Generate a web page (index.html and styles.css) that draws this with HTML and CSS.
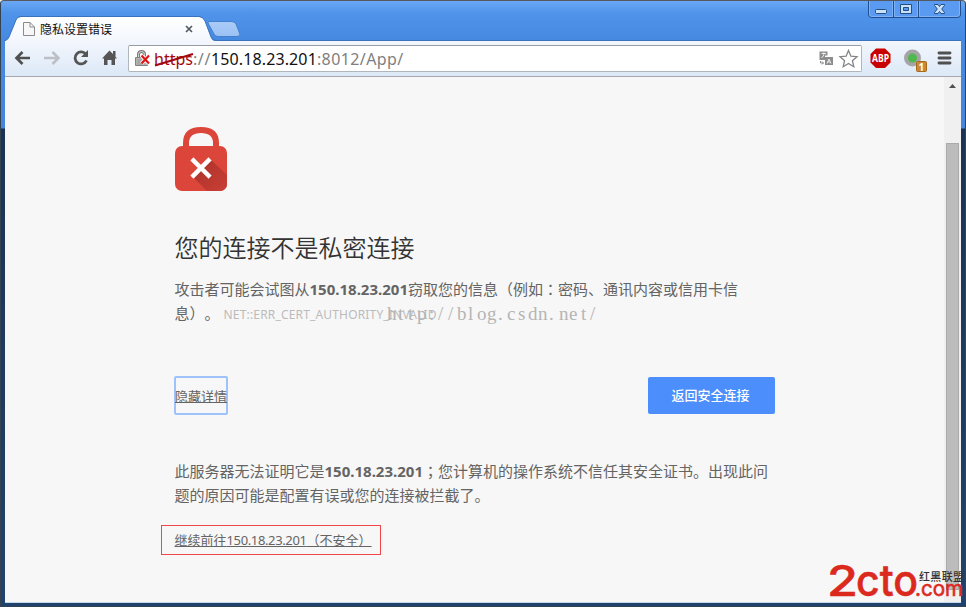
FILE: index.html
```html
<!DOCTYPE html>
<html lang="zh-CN">
<head>
<meta charset="utf-8">
<title>隐私设置错误</title>
<link rel="stylesheet" href="styles.css">
</head>
<body>
<div class="window">
  <header class="titlebar">
    <svg class="tab-shape" width="245" height="25" viewBox="0 0 245 25">
      <defs>
        <linearGradient id="tab" x1="0" y1="0" x2="0" y2="1"><stop offset="0" stop-color="#fff"/><stop offset="1" stop-color="#f3f7fd"/></linearGradient>
        <linearGradient id="newtab" x1="0" y1="0" x2="0" y2="1"><stop offset="0" stop-color="#a9cbf8"/><stop offset="1" stop-color="#9bc1f4"/></linearGradient>
      </defs>
      <path d="M0 26V25Q4 24 5 21L12 4Q13 1 17 1H195Q199 1 201 5L207 21Q208 25 212 25V26Z" fill="url(#tab)"/>
      <path d="M0 25Q4 24 5 21L12 4Q13 .5 17 .5H195Q199 .5 201 5L207 21Q208 24.500 212 24.500H245" fill="none" stroke="#3a72bd"/>
      <path d="M206 5.500H227Q231 5.500 232 8L235.500 17Q237 20.500 232 20.500H214Q211 20.500 210 18L204.500 8Q203 5.500 206 5.500Z" fill="url(#newtab)" stroke="#4580cc"/>
    </svg>
    <div class="tab">
      <svg width="12" height="14" viewBox="0 0 12 14"><path d="M.5.500H7L11.500 5V13.500H.5ZM7 .5V5H11.500" fill="#f7f7f7" stroke="#8b8b8b"/></svg>
      <span class="tab-title">隐私设置错误</span>
      <svg width="8" height="8" viewBox="0 0 8 8"><path d="M1 1L7 7M7 1L1 7" stroke="#535a63" stroke-width="1.700"/></svg>
    </div>
    <svg class="controls" width="94" height="18" viewBox="0 0 94 18">
      <path d="M.5 0V14Q.5 16.500 4 16.500H89Q92.500 16.500 92.500 14V0" fill="#5a9af0" stroke="#234e8e"/>
      <path d="M25.500 0V16M50.500 0V16" stroke="#234e8e"/>
      <path d="M1.500 0V13Q2 15.500 4 15.500H24.500V0M26.500 0V15.500H49.500V0M51.500 0V15.500H89Q91.500 15 91.500 13V0" fill="none" stroke="#7db2f6"/>
      <rect x="7.500" y="8.500" width="11" height="4" rx="1" fill="#c9e0fb" stroke="#234e80"/>
      <path d="M32.500 3.500H43.500V12.500H32.500ZM35.500 6.500V9.500H40.500V6.500Z" fill="#c9e0fb" fill-rule="evenodd" stroke="#234e80"/>
      <path transform="translate(0 -1)" d="M66.500 4.500H70L71.500 6.500L73 4.500H76.500V5.500L73.700 9L76.500 12.500V13.500H73L71.500 11.500L70 13.500H66.500V12.500L69.300 9L66.500 5.500Z" fill="#c9e0fb" stroke="#234e80"/>
    </svg>
  </header>
  <div class="body">
    <nav class="toolbar">
      <svg width="115" height="36" viewBox="0 0 115 36">
        <path d="M25 18H13M17.500 12L11.500 18L17.500 24" fill="none" stroke="#505050" stroke-width="2.700"/>
        <path d="M39 18H52M47.500 12L53.500 18L47.500 24" fill="none" stroke="#bcc0c5" stroke-width="2.500"/>
        <path d="M81 14.500A6 6 0 1 0 81.500 20.500" fill="none" stroke="#555" stroke-width="2.800"/><path d="M83 10V17H76Z" fill="#555"/>
        <path d="M97 18.500L104.500 10.500L108 14V11H110.500V16.800L112 18.500H110V25H106.500V20H102.500V25H99V18.500Z" fill="#555"/>
      </svg>
      <div class="omnibox">
        <svg class="badlock" width="16" height="17" viewBox="0 0 16 17">
          <path d="M3.500 8V4.500Q3.500 1.500 6.500 1.500Q9.500 1.500 9.500 4.500V8" fill="none" stroke="#777" stroke-width="3"/><path d="M3.500 8V4.500Q3.500 1.500 6.500 1.500Q9.500 1.500 9.500 4.500V8" fill="none" stroke="#ddd"/>
          <path d="M.5 7.500H12.500V15.500H.5Z" fill="#b6b6b6" stroke="#828282"/><path d="M2 10H10M2 12H10M2 14H10" stroke="#999"/>
          <path d="M6.500 5.500L14 13.500M14 5.500L6.500 13.500" stroke="#fff" stroke-width="4"/><path d="M6.500 5.500L14 13.500M14 5.500L6.500 13.500" stroke="#dc1515" stroke-width="2.200"/>
        </svg>
        <span class="url"><span class="scheme">https<svg class="strike" width="41" height="15" viewBox="0 0 41 15"><path d="M1 13.500L39 2" stroke="#a3080c" stroke-width="2"/></svg></span><span class="sep">://</span><span class="host">150.18.23.201</span><span class="path">:8012/App/</span></span>
        <svg class="omni-icons" width="40" height="20" viewBox="0 0 40 20">
          <path d="M.5 2.500H8.500V6.500H6V11H.5Z" fill="#8c8c8c"/><path d="M6 8H14V16H6Z" fill="#8c8c8c"/><path d="M2.500 4.500H7M4.800 3.500V5.500Q4.500 8 2.500 8.500" stroke="#eee" fill="none"/><path d="M8 14.500L10 10L12 14.500M9 13H11" fill="none" stroke="#eee"/><path d="M1.500 12V14H4.500M3 12.500L4.500 14L3 15.500" fill="none" stroke="#8c8c8c"/>
          <path d="M29.500 1.500L31.900 7.200L38 7.700L33.400 11.700L34.800 17.700L29.500 14.500L24.200 17.700L25.600 11.700L21 7.700L27.100 7.200Z" fill="#fff" stroke="#848484" stroke-width="1.300"/>
        </svg>
      </div>
      <svg class="ext" width="99" height="36" viewBox="0 0 99 36">
        <path d="M14 8.500H23L28.500 14V22.500L23 28H14L8.500 22.500V14Z" fill="#c90000"/>
        <text class="abp" x="10" y="21.800" textLength="17" lengthAdjust="spacingAndGlyphs">ABP</text>
        <circle cx="50.500" cy="18" r="8.500" fill="#a5a5a5"/><circle cx="50.500" cy="18" r="4.500" fill="#4fb84e"/>
        <rect x="54.500" y="21.500" width="10" height="10" rx="1" fill="#cc8934" stroke="#a8681b"/><text class="count" x="56.500" y="30.500">1</text>
        <path d="M77 13H88M77 18H88M77 23H88" stroke="#505050" stroke-width="2.900" stroke-linecap="round"/>
      </svg>
    </nav>
    <div class="viewport">
      <main class="page">
        <svg class="lock" width="52" height="64" viewBox="0 0 52 64">
          <defs><linearGradient id="shade" x1="0" y1="0" x2="1" y2="1"><stop offset="0" stop-color="#a83029"/><stop offset="1" stop-color="#cc4036"/></linearGradient>
          <clipPath id="lockbody"><rect y="19" width="52" height="45" rx="7"/></clipPath></defs>
          <path d="M11 21V16Q11 3 26 3Q41 3 41 16V21" fill="none" stroke="#dc4539" stroke-width="6"/>
          <rect y="19" width="52" height="45" rx="7" fill="#dc4539"/>
          <path d="M35 32L54 50V66H34L17 49Z" fill="url(#shade)" clip-path="url(#lockbody)"/>
          <path d="M18.500 33.500L33.500 48.500M33.500 33.500L18.500 48.500" stroke="#fff" stroke-width="4.500" stroke-linecap="square"/>
        </svg>
        <h1>您的连接不是私密连接</h1>
        <p class="lead">攻击者可能会试图从<b>150.18.23.201</b>窃取您的信息<i lang="zh-TW">（</i>例如<i lang="zh-TW">：</i>密码、通讯内容或信用卡信<br>息<i lang="zh-TW">）</i>。<span class="code">NET::ERR_CERT_AUTHORITY_INVALID</span></p>
        <div class="actions"><a class="details">隐藏详情</a><button>返回安全连接</button></div>
        <p class="explain">此服务器无法证明它是<b>150.18.23.201</b><i lang="zh-TW">；</i>您计算机的操作系统不信任其安全证书。出现此问<br>题的原因可能是配置有误或您的连接被拦截了。</p>
        <div class="proceed"><a>继续前往<span class="ip">150.18.23.201</span><i lang="zh-TW">（</i>不安全<i lang="zh-TW">）</i></a></div>
      </main>
      <aside class="scroll"><svg width="7" height="4" viewBox="0 0 7 4"><path d="M0 4L3.500 0L7 4Z" fill="#505050"/></svg><div class="thumb"></div></aside>
    </div>
  </div>
  <svg class="watermark" width="220" height="30" viewBox="0 0 220 30"><text y="21" x="1 12 22 31 43 52 62 71 82 91 101 112 121 132 142 152 163 173 183 195 204">http://blog.csdn.net/</text></svg>
  <svg class="brand" width="142" height="44" viewBox="0 0 142 44">
    <g class="brand-red"><text class="big" x="3" y="36" textLength="31" lengthAdjust="spacingAndGlyphs">2</text><text class="big" x="32" y="36" textLength="62" lengthAdjust="spacingAndGlyphs">cto</text><text class="com" x="91" y="36" textLength="48" lengthAdjust="spacingAndGlyphs">.com</text></g>
    <text class="union" x="95" y="21" textLength="45">红黑联盟</text>
  </svg>
</div>
</body>
</html>
```
FILE: styles.css
```css
* { box-sizing: border-box; }
body { margin: 0; width: 966px; height: 607px; overflow: hidden; font-family: "Noto Sans", "Noto Sans CJK SC", sans-serif; text-spacing-trim: space-all; }
svg { display: block; flex: none; overflow: visible; }
.window { position: relative; width: 966px; height: 607px; display: flex; flex-direction: column; padding: 0 4px 3px; border: 1px solid #35424f; border-top-color: #55585c; border-radius: 4px 4px 0 0; background: linear-gradient(#6aa8f5 0, #4f94ea 12px, #4589e0 40px, #4286dd 127px, #1c3354 128px, #20436d 100%); }
.titlebar { position: relative; flex: none; display: flow-root; height: 40px; border-bottom: 1px solid #3a72bd; }
.tab-shape { position: absolute; left: -1px; top: 15px; overflow: hidden; }
.tab { position: relative; display: flex; align-items: center; width: 192px; height: 16px; margin: 20px 0 0 18px; }
.tab-title { margin-left: 5px; width: 145px; font: 12px/16px "Noto Sans CJK SC", sans-serif; color: #111; }
.controls { position: absolute; left: 863px; top: 0; }
.body { flex: 1; min-height: 0; display: flex; flex-direction: column; border-bottom: 1px solid #c5d9ed; }
.toolbar { flex: none; display: flex; height: 36px; border-bottom: 1px solid #a7aaad; background: linear-gradient(#f3f7fd, #dce8f7); }
.toolbar > svg { margin-top: -1px; }
.omnibox { width: 734px; height: 27px; margin: 4px 0 0 8px; display: flex; align-items: center; border: 1px solid #b0b6bd; border-top-color: #979ca3; border-radius: 2px; background: #fff; padding-left: 6px; }
.url { width: 665px; margin-left: 3px; font-size: 16px; line-height: 24px; white-space: nowrap; color: #808080; }
.scheme { position: relative; color: #a3080c; }
.strike { position: absolute; left: 0; top: 4px; }
.sep { letter-spacing: .6px; }
.host { color: #111; letter-spacing: .12px; }
.path { letter-spacing: .4px; }
.abp { font: bold 10px "Open Sans", sans-serif; fill: #fff; }
.count { font: bold 10px "Open Sans", sans-serif; fill: #fff; }
.viewport { flex: 1; min-height: 0; display: flex; background: #f7f7f7; }
.page { width: 939px; padding: 50px 0 0 169px; color: #646464; }
.lock { margin-left: 1px; }
h1 { margin: 37px 0 0 .5px; font: 350 24px/38px "Noto Sans CJK SC", sans-serif; color: #333; }
p { margin: 0 0 0 .5px; font-size: 15px; line-height: 24px; white-space: nowrap; }
i { font-family: "Noto Sans CJK TC", sans-serif; font-style: normal; line-height: 1; }
.lead { margin-top: 11px; }
.code { margin-left: 4px; font-size: 12px; letter-spacing: .17px; color: #bbb; }
.actions { width: 601px; display: flex; justify-content: space-between; margin-top: 50px; }
.details { width: 54px; height: 39px; border: 2px solid #9fc2fb; border-radius: 2px; font-size: 13px; line-height: 36px; text-decoration: underline; white-space: nowrap; margin: -1px 0 -1px; text-indent: -1px; }
button { width: 127px; height: 37px; padding: 0 2px 2px 0; border: 0; border-radius: 2px; background: #4c8efb; color: #fff; font: 500 13px/35px "Noto Sans CJK SC", sans-serif; }
.explain { margin-top: 45px; }
.proceed { width: 220px; height: 30px; margin: 18px 0 0 -13px; padding-left: 12.500px; border: 1px solid #f04848; font-size: 13px; line-height: 28px; white-space: nowrap; }
.proceed a { text-decoration: underline; }
.ip { letter-spacing: -.37px; }
.scroll { width: 17px; padding: 7px 0 0 2px; background: #f0f0f0; }
.scroll svg { margin-left: 3px; }
.thumb { width: 13px; height: 447px; margin-top: 55px; border: 1px solid #aaa; background: #bcbcbc; }
.watermark { position: absolute; left: 385px; top: 298px; }
.watermark text { font: 19px "Liberation Serif", serif; fill: #b5b5b5; }
.brand { position: absolute; left: 823px; top: 559px; }
.brand-red { fill: #dc291e; stroke: #dc291e; }
.big { font: 500 43px Inter, sans-serif; stroke-width: .5px; }
.com { font: 22px Inter, sans-serif; stroke-width: .6px; }
.union { font: 500 11px "Noto Sans CJK SC", sans-serif; fill: #333; }
```
